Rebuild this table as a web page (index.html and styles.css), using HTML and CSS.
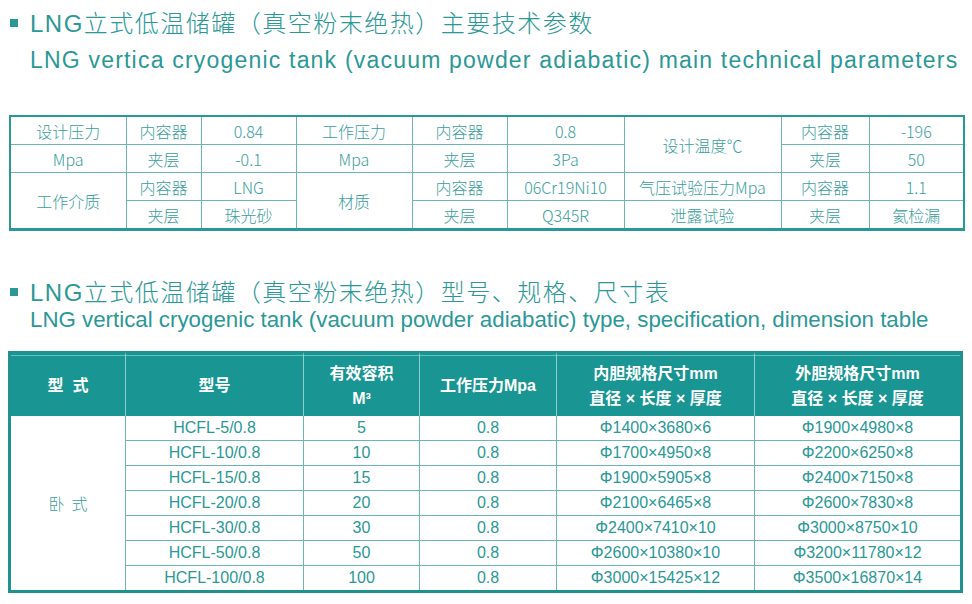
FILE: index.html
```html
<!DOCTYPE html>
<html lang="zh">
<head>
<meta charset="utf-8">
<title>LNG立式低温储罐</title>
<link rel="stylesheet" href="styles.css">
</head>
<body>
<section class="sec sec-one">
  <h2 class="title-cn"><span class="bullet"></span>LNG立式低温储罐（真空粉末绝热）主要技术参数</h2>
  <p class="title-en en-one">LNG vertica cryogenic tank (vacuum powder adiabatic) main technical parameters</p>
  <table class="params">
    <colgroup>
      <col class="p1"><col class="p2"><col class="p3"><col class="p4"><col class="p5"><col class="p6"><col class="p7"><col class="p8"><col class="p9">
    </colgroup>
    <tr><td>设计压力</td><td>内容器</td><td>0.84</td><td>工作压力</td><td>内容器</td><td>0.8</td><td rowspan="2">设计温度℃</td><td>内容器</td><td>-196</td></tr>
    <tr><td>Mpa</td><td>夹层</td><td>-0.1</td><td>Mpa</td><td>夹层</td><td>3Pa</td><td>夹层</td><td>50</td></tr>
    <tr><td rowspan="2">工作介质</td><td>内容器</td><td>LNG</td><td rowspan="2">材质</td><td>内容器</td><td>06Cr19Ni10</td><td>气压试验压力Mpa</td><td>内容器</td><td>1.1</td></tr>
    <tr><td>夹层</td><td>珠光砂</td><td>夹层</td><td>Q345R</td><td>泄露试验</td><td>夹层</td><td>氦检漏</td></tr>
  </table>
</section>
<section class="sec sec-two">
  <h2 class="title-cn"><span class="bullet"></span>LNG立式低温储罐（真空粉末绝热）型号、规格、尺寸表</h2>
  <p class="title-en en-two">LNG vertical cryogenic tank (vacuum powder adiabatic) type, specification, dimension table</p>
  <table class="models">
    <colgroup>
      <col class="m1"><col class="m2"><col class="m3"><col class="m4"><col class="m5"><col class="m6">
    </colgroup>
    <thead>
      <tr><th>型&nbsp;&nbsp;式</th><th>型号</th><th>有效容积<br>M³</th><th>工作压力Mpa</th><th>内胆规格尺寸mm<br>直径 × 长度 × 厚度</th><th>外胆规格尺寸mm<br>直径 × 长度 × 厚度</th></tr>
    </thead>
    <tbody>
      <tr><td rowspan="7" class="kind">卧&nbsp;&nbsp;式</td><td>HCFL-5/0.8</td><td>5</td><td>0.8</td><td>Φ1400×3680×6</td><td>Φ1900×4980×8</td></tr>
      <tr><td>HCFL-10/0.8</td><td>10</td><td>0.8</td><td>Φ1700×4950×8</td><td>Φ2200×6250×8</td></tr>
      <tr><td>HCFL-15/0.8</td><td>15</td><td>0.8</td><td>Φ1900×5905×8</td><td>Φ2400×7150×8</td></tr>
      <tr><td>HCFL-20/0.8</td><td>20</td><td>0.8</td><td>Φ2100×6465×8</td><td>Φ2600×7830×8</td></tr>
      <tr><td>HCFL-30/0.8</td><td>30</td><td>0.8</td><td>Φ2400×7410×10</td><td>Φ3000×8750×10</td></tr>
      <tr><td>HCFL-50/0.8</td><td>50</td><td>0.8</td><td>Φ2600×10380×10</td><td>Φ3200×11780×12</td></tr>
      <tr><td>HCFL-100/0.8</td><td>100</td><td>0.8</td><td>Φ3000×15425×12</td><td>Φ3500×16870×14</td></tr>
    </tbody>
  </table>
</section>
</body>
</html>
```
FILE: styles.css
```css
html, body {
  margin: 0;
  padding: 0;
  background: #ffffff;
}
body {
  width: 972px;
  height: 604px;
  overflow: hidden;
  color: #2a9896;
  font-family: "Liberation Sans", "Noto Sans CJK SC", sans-serif;
}
.sec {
  display: flex;
  flex-direction: column;
}
.sec-one {
  padding-top: 4px;
}
.title-cn {
  margin: 0;
  display: flex;
  align-items: center;
  gap: 12px;
  padding-left: 10px;
  height: 34px;
  font-size: 24px;
  letter-spacing: 1.5px;
  font-weight: 300;
  font-family: "Liberation Sans", "Noto Sans CJK SC", sans-serif;
  color: #2a9896;
  white-space: nowrap;
}
.bullet {
  width: 8px;
  height: 8px;
  margin-top: 3px;
  background: #2a9896;
  flex: none;
}
.title-en {
  margin: 0;
  padding-left: 30px;
  white-space: nowrap;
  color: #2a9896;
}
.en-one {
  margin-top: 5px;
  height: 34px;
  line-height: 34px;
  font-size: 23px;
  letter-spacing: 1.2px;
}
.en-two {
  height: 30px;
  line-height: 30px;
  font-size: 22.3px;
}
.sec-two {
  margin-top: 44px;
}
.sec-two .title-cn {
  height: 30px;
}

/* parameters table */
.params {
  margin: 38px 0 0 9px;
  width: 954px;
  table-layout: fixed;
  border-collapse: collapse;
  border: 2px solid #2a9896;
  border-bottom-width: 3px;
  font-family: "Noto Sans CJK SC", sans-serif;
  font-weight: 300;
  font-size: 16px;
  color: #3a9e9c;
}
.params td {
  border: 1px solid #6db5b4;
  height: 27px;
  padding: 0;
  text-align: center;
  vertical-align: middle;
  line-height: 20px;
  white-space: nowrap;
}
.p1 { width: 116px; }
.p2 { width: 75px; }
.p3 { width: 95px; }
.p4 { width: 116px; }
.p5 { width: 95px; }
.p6 { width: 117px; }
.p7 { width: 157px; }
.p8 { width: 88px; }
.p9 { width: 95px; }

/* models table */
.models {
  margin: 16px 0 0 8px;
  width: 955px;
  table-layout: fixed;
  border-collapse: separate;
  border-spacing: 0;
  border: 3px solid #1f918f;
  border-top-width: 1px;
  font-size: 16px;
  color: #2a9896;
}
.m1 { width: 114px; }
.m2 { width: 178px; }
.m3 { width: 116px; }
.m4 { width: 137px; }
.m5 { width: 198px; }
.m6 { width: 206px; }
.models th {
  background: #199593;
  color: #ffffff;
  font-family: "Liberation Sans", "Noto Sans CJK SC", sans-serif;
  font-weight: bold;
  font-size: 16px;
  line-height: 25px;
  height: 61px;
  padding: 0;
  border-top: 3px solid #199593;
  box-shadow: inset 0 1px 0 #6dbdbc;
  border-left: 1px solid #8fcecd;
  text-align: center;
  vertical-align: middle;
}
.models th:first-child {
  border-left: none;
}
.models td {
  height: 24px;
  padding: 0;
  line-height: 20px;
  text-align: center;
  vertical-align: middle;
  border-left: 1px solid #6db5b4;
  border-top: 1px solid #6db5b4;
  white-space: nowrap;
}
.models tbody tr:first-child td {
  border-top: none;
}
.models td.kind {
  border-left: none;
  font-family: "Noto Sans CJK SC", sans-serif;
  font-weight: 300;
  color: #3a9e9c;
}
```
